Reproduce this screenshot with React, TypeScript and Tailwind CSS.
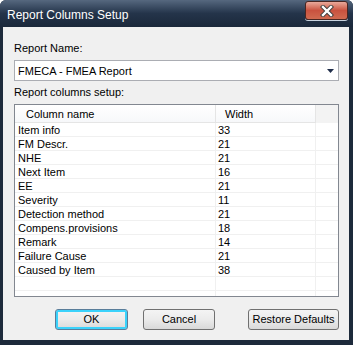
import React from 'react';

const ROWS: [string, string][] = [
  ['Item info', '33'],
  ['FM Descr.', '21'],
  ['NHE', '21'],
  ['Next Item', '16'],
  ['EE', '21'],
  ['Severity', '11'],
  ['Detection method', '21'],
  ['Compens.provisions', '18'],
  ['Remark', '14'],
  ['Failure Cause', '21'],
  ['Caused by Item', '38'],
  ['', ''],
  ['', ''],
];

function CloseButton() {
  return (
    <div className="w-[43px] h-[19px] rounded-[3px] border border-[#4a2621] bg-gradient-to-b from-[#e9a99b] via-[#c9523f] to-[#d06a50] shadow-[0_1px_0_#c9d3df] flex items-center justify-center">
      <svg width="14" height="12" viewBox="0 0 14 12">
        <path d="M3 2 L11 10 M11 2 L3 10" stroke="#3b3b3b" strokeWidth="4.2" strokeLinecap="square" />
        <path d="M3 2 L11 10 M11 2 L3 10" stroke="#ffffff" strokeWidth="2.4" strokeLinecap="square" />
      </svg>
    </div>
  );
}

function Button({ label, width, focused }: { label: string; width: string; focused?: boolean }) {
  return (
    <button
      className={`${width} h-[21px] rounded-[3px] border text-[11px] text-black bg-gradient-to-b from-[#f4f4f4] via-[#ebebeb] to-[#d9d9d9] ${
        focused ? 'border-[#5a7d9a] shadow-[inset_0_0_0_2px_#3ad2fb]' : 'border-[#707070]'
      }`}
    >
      {label}
    </button>
  );
}

export default function App() {
  return (
    <div
      className="w-[353px] h-[345px] bg-[#1d2a3b] rounded-t-[6px] flex flex-col overflow-hidden"
      style={{ fontFamily: '"Liberation Sans", Arial, sans-serif' }}
    >
      {/* Title bar */}
      <div className="h-[27px] shrink-0 flex items-start justify-between pl-[7px] pr-[5px] bg-gradient-to-b from-[#56687f] via-[#24344a] to-[#1b283a]">
        <span className="text-[12px] text-white leading-[15px] mt-[8px]">Report Columns Setup</span>
        <div className="mt-[1px]">
          <CloseButton />
        </div>
      </div>

      {/* Client */}
      <div className="flex-1 ml-[3px] mr-[4px] mb-[5px] bg-[#f0f0f0] pl-[11px] pr-[10px] pt-[14px] flex flex-col text-[11px] text-black">
        <div className="leading-[14px]">Report Name:</div>
        <div className="mt-[5px] h-[21px] bg-white border border-[#abadb3] flex items-center justify-between pl-[3px] pr-[4px]">
          <span className="leading-[14px]">FMECA - FMEA Report</span>
          <svg width="7" height="4" viewBox="0 0 7 4">
            <path d="M0 0 H7 L3.5 4 Z" fill="#1f2d4a" />
          </svg>
        </div>
        <div className="mt-[4px] leading-[14px]">Report columns setup:</div>

        <div className="mt-[5px] h-[193px] bg-white border border-[#828790] overflow-hidden">
          <div className="grid grid-cols-[201px_100px_1fr] h-[18px] border-b border-[#e5e5e5] bg-gradient-to-b from-white to-[#f7f8fa]">
            <div className="pl-[11px] pt-[1px] leading-[17px] border-r border-[#e5e5e5]">Column name</div>
            <div className="pl-[9px] pt-[1px] leading-[17px] border-r border-[#e5e5e5]">Width</div>
            <div className="bg-[#f3f3f3]" />
          </div>
          {ROWS.map(([name, w], i) => (
            <div key={i} className="grid grid-cols-[201px_100px_1fr] h-[14px] border-b border-[#f0f0f0]">
              <div className="pl-[3px] pt-[1px] leading-[13px] border-r border-[#f0f0f0] whitespace-nowrap">{name}</div>
              <div className="pl-[2px] pt-[1px] leading-[13px] border-r border-[#f0f0f0]">{w}</div>
              <div />
            </div>
          ))}
        </div>

        <div className="mt-[12px] flex items-start">
          <div className="ml-[41px]">
            <Button label="OK" width="w-[73px]" focused />
          </div>
          <div className="ml-[15px]">
            <Button label="Cancel" width="w-[72px]" />
          </div>
          <div className="ml-[33px]">
            <Button label="Restore Defaults" width="w-[91px]" />
          </div>
        </div>
      </div>
    </div>
  );
}
